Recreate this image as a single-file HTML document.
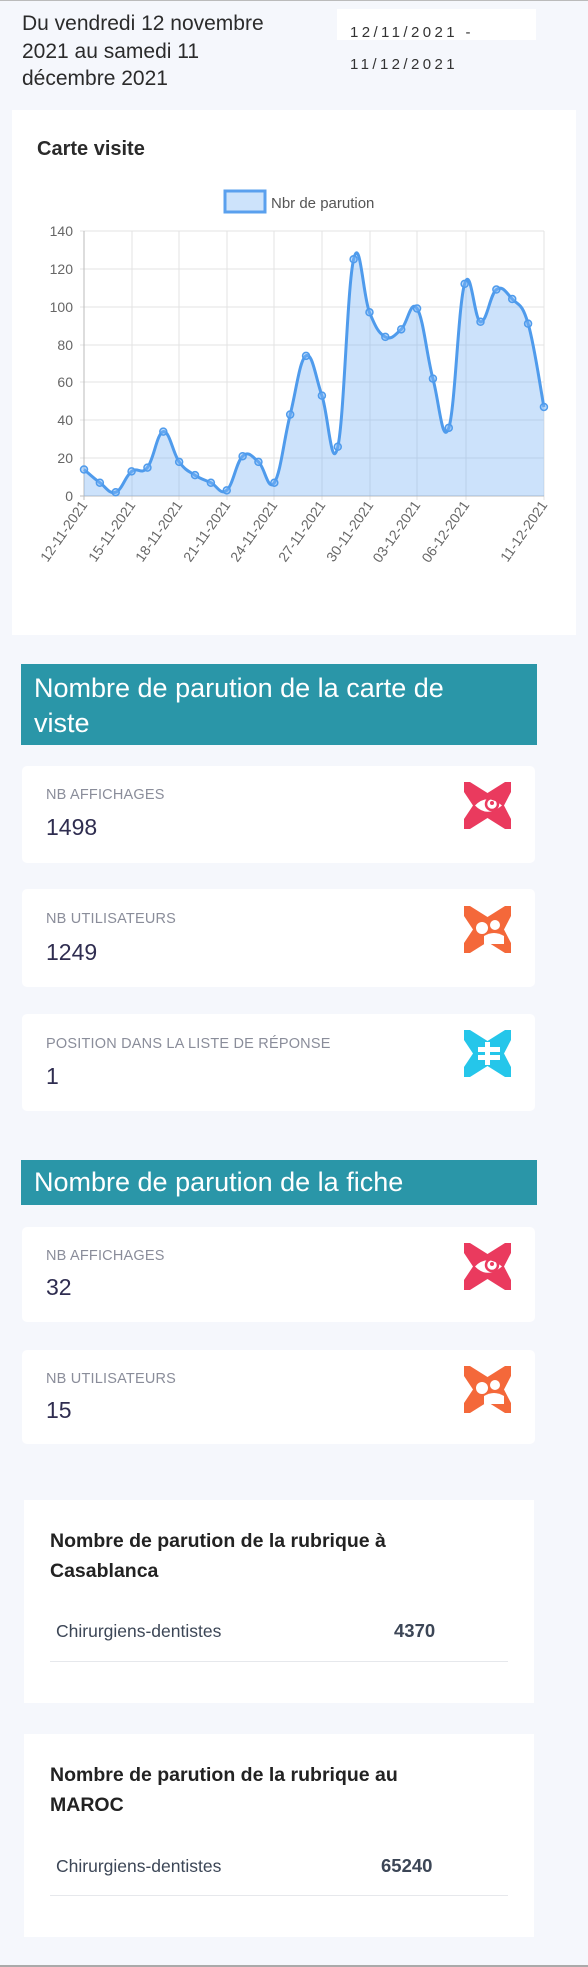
<!DOCTYPE html>
<html><head><meta charset="utf-8">
<style>
*{margin:0;padding:0;box-sizing:border-box}
body{width:588px;height:1967px;background:#f5f7fc;font-family:"Liberation Sans",sans-serif;position:relative;overflow:hidden}
.a{position:absolute}
.dt{left:22px;top:10px;font-size:21px;line-height:27.5px;color:#2b2b2b}
.db{left:337px;top:9px;width:199px;height:31px;background:#fff}
.dtxt{font-size:15px;letter-spacing:3.4px;color:#333}
.card{position:absolute;left:22px;width:513px;background:#fff;border-radius:5px}
.lbl{position:absolute;left:24px;font-size:14.5px;color:#8a8d9a;letter-spacing:.2px}
.val{position:absolute;left:24px;font-size:23px;color:#2f2d50}
.ico{position:absolute;left:442px;width:47px;height:47px}
.hd{position:absolute;left:21px;width:516px;background:#2a96a8;color:#fff;font-size:27px;padding-left:13px}
.box{position:absolute;left:24px;width:510px;background:#fff}
.bt{position:absolute;left:26px;font-size:19.5px;font-weight:bold;color:#222;line-height:30px}
.rn{position:absolute;left:32px;font-size:17.5px;color:#3c4656}
.rv{position:absolute;font-size:18.5px;font-weight:bold;color:#3c4656}
.ln{position:absolute;left:26px;width:458px;height:1px;background:#e6e8ec}
</style></head><body>
<div class="a" style="left:0;top:0;width:588px;height:1px;background:#bbb"></div>
<div class="a dt">Du vendredi 12 novembre<br>2021 au samedi 11<br>décembre 2021</div>
<div class="a db"></div>
<div class="a dtxt" style="left:350px;top:24px">12/11/2021 -</div>
<div class="a dtxt" style="left:350px;top:56px">11/12/2021</div>

<div class="a" style="left:12px;top:110px;width:564px;height:525px;background:#fff"></div>
<div class="a" style="left:37px;top:138px;font-size:20px;font-weight:bold;color:#2a2a2a">Carte visite</div>
<svg class="a" style="left:0;top:0" width="588" height="640">
<rect x="225" y="191" width="40" height="21" fill="#cde3fb" stroke="#5aa0ee" stroke-width="3"/>
<text x="271" y="208" font-family="Liberation Sans Narrow, Liberation Sans, sans-serif" font-size="15" fill="#555">Nbr de parution</text>
<g stroke="#e3e3e3" stroke-width="1">
<line x1="80" y1="231" x2="544" y2="231"/><line x1="80" y1="269" x2="544" y2="269"/><line x1="80" y1="307" x2="544" y2="307"/><line x1="80" y1="345" x2="544" y2="345"/><line x1="80" y1="382" x2="544" y2="382"/><line x1="80" y1="420" x2="544" y2="420"/><line x1="80" y1="458" x2="544" y2="458"/>
<line x1="132" y1="231" x2="132" y2="500"/><line x1="179" y1="231" x2="179" y2="500"/><line x1="227" y1="231" x2="227" y2="500"/><line x1="274" y1="231" x2="274" y2="500"/><line x1="322" y1="231" x2="322" y2="500"/><line x1="370" y1="231" x2="370" y2="500"/><line x1="417" y1="231" x2="417" y2="500"/><line x1="466" y1="231" x2="466" y2="500"/><line x1="544" y1="231" x2="544" y2="500"/>
</g>
<line x1="84" y1="231" x2="84" y2="500" stroke="#bbb"/>
<line x1="80" y1="496" x2="544" y2="496" stroke="#bbb"/>
<g font-family="Liberation Sans Narrow, Liberation Sans, sans-serif" font-size="14" fill="#666" text-anchor="end">
<text x="73" y="236">140</text><text x="73" y="274">120</text><text x="73" y="312">100</text><text x="73" y="350">80</text><text x="73" y="387">60</text><text x="73" y="425">40</text><text x="73" y="463">20</text><text x="73" y="501">0</text>
<text transform="translate(88,505) rotate(-55)">12-11-2021</text>
<text transform="translate(136,505) rotate(-55)">15-11-2021</text>
<text transform="translate(183,505) rotate(-55)">18-11-2021</text>
<text transform="translate(231,505) rotate(-55)">21-11-2021</text>
<text transform="translate(278,505) rotate(-55)">24-11-2021</text>
<text transform="translate(326,505) rotate(-55)">27-11-2021</text>
<text transform="translate(374,505) rotate(-55)">30-11-2021</text>
<text transform="translate(421,505) rotate(-55)">03-12-2021</text>
<text transform="translate(470,505) rotate(-55)">06-12-2021</text>
<text transform="translate(548,505) rotate(-55)">11-12-2021</text>
</g>
<path id="fill" fill="rgba(120,180,245,0.38)" d=""/>
<path id="line" fill="none" stroke="#4f9bec" stroke-width="3" d=""/>
<g id="pts" fill="rgba(120,180,245,0.5)" stroke="#4f9bec" stroke-width="1.5"></g>
</svg>
<script>
(function(){
var v=[14,7,2,13,15,34,18,11,7,3,21,18,7,43,74,53,26,125,97,84,88,99,62,36,112,92,109,104,91,47];
var P=v.map(function(y,i){return [84+i*15.86,496-y*1.894];});
var d="M"+P[0][0]+","+P[0][1];
var t=0.2;
for(var i=0;i<P.length-1;i++){
var p0=P[i-1]||P[i],p1=P[i],p2=P[i+1],p3=P[i+2]||P[i+1];
var c1=[p1[0]+(p2[0]-p0[0])*t,p1[1]+(p2[1]-p0[1])*t];
var c2=[p2[0]-(p3[0]-p1[0])*t,p2[1]-(p3[1]-p1[1])*t];
d+=" C"+c1[0].toFixed(1)+","+c1[1].toFixed(1)+" "+c2[0].toFixed(1)+","+c2[1].toFixed(1)+" "+p2[0].toFixed(1)+","+p2[1].toFixed(1);}
document.getElementById("line").setAttribute("d",d);
document.getElementById("fill").setAttribute("d",d+" L544,496 L84,496 Z");
var g=document.getElementById("pts"),s="";
P.forEach(function(p){s+='<circle cx="'+p[0]+'" cy="'+p[1]+'" r="3.5"/>';});
g.innerHTML=s;
})();
</script>

<div class="hd" style="top:664px;height:81px;line-height:35px;padding-top:7px">Nombre de parution de la carte de<br>viste</div>

<div class="card" style="top:766px;height:97px"><div class="lbl" style="top:21px">NB AFFICHAGES</div><div class="val" style="top:48px">1498</div>
<svg class="ico" style="top:16px" viewBox="0 0 47 47"><rect width="47" height="47" fill="#ea3a5e"/><path d="M6 0H41L23.5 11Z M6 47H41L23.5 36Z M0 10L9 23.5L0 37Z M47 10L40 23.5L47 37Z" fill="#fff"/><path d="M11 23.5Q23 11 38 23.5Q23 36 11 23.5Z" fill="#fff"/><circle cx="28" cy="22" r="6" fill="none" stroke="#ea3a5e" stroke-width="2.5"/><circle cx="28" cy="21" r="2" fill="#ea3a5e"/></svg></div>

<div class="card" style="top:889px;height:98px"><div class="lbl" style="top:22px">NB UTILISATEURS</div><div class="val" style="top:50px">1249</div>
<svg class="ico" style="top:17px" viewBox="0 0 47 47"><rect width="47" height="47" fill="#f4683a"/><path d="M6 0H41L23.5 11Z M6 47H41L23.5 36Z M0 10L9 23.5L0 37Z M47 10L40 23.5L47 37Z" fill="#fff"/><circle cx="18" cy="22" r="6" fill="#fff"/><circle cx="31" cy="19" r="5" fill="#fff"/><path d="M20 30Q30 24 40 30L40 38L20 38Z" fill="#fff"/></svg></div>

<div class="card" style="top:1014px;height:97px"><div class="lbl" style="top:22px">POSITION DANS LA LISTE DE RÉPONSE</div><div class="val" style="top:49px">1</div>
<svg class="ico" style="top:16px" viewBox="0 0 47 47"><rect width="47" height="47" fill="#25c6ea"/><path d="M6 0H41L23.5 11Z M6 47H41L23.5 36Z M0 10L9 23.5L0 37Z M47 10L40 23.5L47 37Z" fill="#fff"/><rect x="14" y="17" width="22" height="5" fill="#fff"/><rect x="14" y="25" width="22" height="5" fill="#fff"/><rect x="21" y="12" width="5" height="23" fill="#fff"/></svg></div>

<div class="hd" style="top:1160px;height:45px;line-height:45px">Nombre de parution de la fiche</div>

<div class="card" style="top:1227px;height:95px"><div class="lbl" style="top:21px">NB AFFICHAGES</div><div class="val" style="top:47px">32</div>
<svg class="ico" style="top:16px" viewBox="0 0 47 47"><rect width="47" height="47" fill="#ea3a5e"/><path d="M6 0H41L23.5 11Z M6 47H41L23.5 36Z M0 10L9 23.5L0 37Z M47 10L40 23.5L47 37Z" fill="#fff"/><path d="M11 23.5Q23 11 38 23.5Q23 36 11 23.5Z" fill="#fff"/><circle cx="28" cy="22" r="6" fill="none" stroke="#ea3a5e" stroke-width="2.5"/><circle cx="28" cy="21" r="2" fill="#ea3a5e"/></svg></div>

<div class="card" style="top:1350px;height:94px"><div class="lbl" style="top:21px">NB UTILISATEURS</div><div class="val" style="top:47px">15</div>
<svg class="ico" style="top:16px" viewBox="0 0 47 47"><rect width="47" height="47" fill="#f4683a"/><path d="M6 0H41L23.5 11Z M6 47H41L23.5 36Z M0 10L9 23.5L0 37Z M47 10L40 23.5L47 37Z" fill="#fff"/><circle cx="18" cy="22" r="6" fill="#fff"/><circle cx="31" cy="19" r="5" fill="#fff"/><path d="M20 30Q30 24 40 30L40 38L20 38Z" fill="#fff"/></svg></div>

<div class="box" style="top:1500px;height:203px">
<div class="bt" style="top:26px">Nombre de parution de la rubrique à<br>Casablanca</div>
<div class="rn" style="top:121px">Chirurgiens-dentistes</div><div class="rv" style="top:120px;left:370px">4370</div>
<div class="ln" style="top:161px"></div></div>

<div class="box" style="top:1734px;height:203px">
<div class="bt" style="top:26px">Nombre de parution de la rubrique au<br>MAROC</div>
<div class="rn" style="top:122px">Chirurgiens-dentistes</div><div class="rv" style="top:121px;left:357px">65240</div>
<div class="ln" style="top:161px"></div></div>

<div class="a" style="left:0;top:1965px;width:588px;height:2px;background:#aaa"></div>
</body></html>
